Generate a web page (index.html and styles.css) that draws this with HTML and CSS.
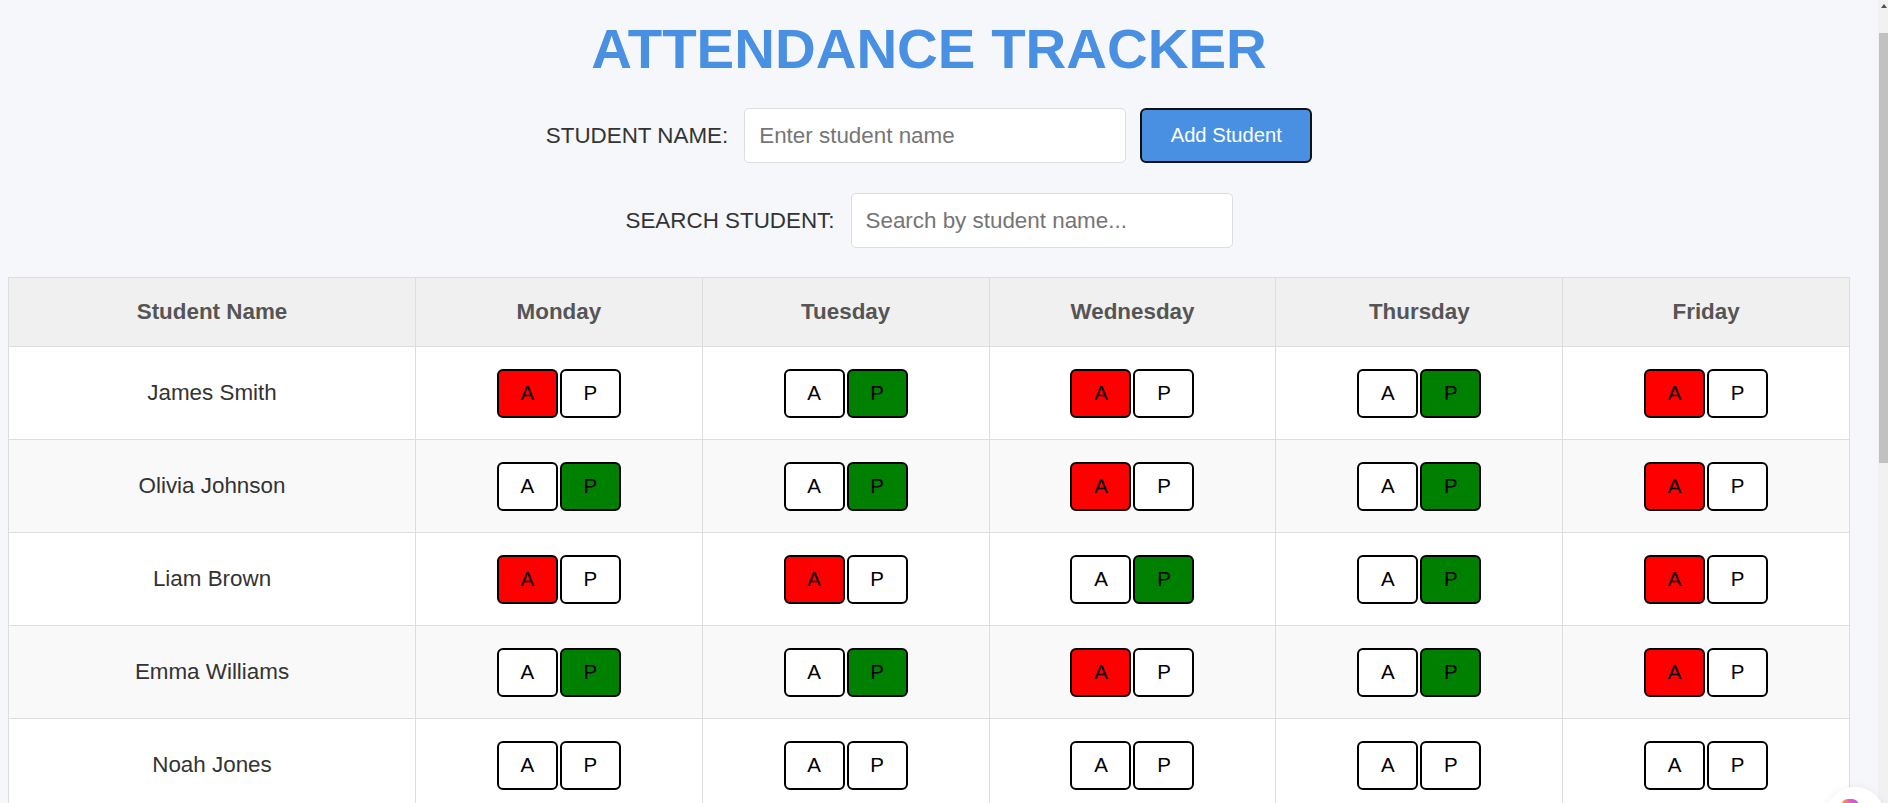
FILE: index.html
```html
<!DOCTYPE html>
<html lang="en">
<head>
<meta charset="utf-8">
<title>Attendance Tracker</title>
<link rel="stylesheet" href="styles.css">
</head>
<body>
<div class="app">
  <h1 class="title">ATTENDANCE TRACKER</h1>
  <div class="form-row">
    <label class="form-label" for="name">STUDENT NAME:</label>
    <input id="name" class="text-input" type="text" placeholder="Enter student name">
    <button class="add-btn">Add Student</button>
  </div>
  <div class="form-row search-row">
    <label class="form-label" for="search">SEARCH STUDENT:</label>
    <input id="search" class="text-input" type="text" placeholder="Search by student name...">
  </div>
  <table class="att-table">
    <colgroup>
      <col class="col-name">
      <col><col><col><col><col>
    </colgroup>
    <thead>
      <tr>
        <th>Student Name</th><th>Monday</th><th>Tuesday</th><th>Wednesday</th><th>Thursday</th><th>Friday</th>
      </tr>
    </thead>
    <tbody>
      <tr>
        <td>James Smith</td>
        <td><div class="ap"><button class="ap-btn absent">A</button><button class="ap-btn">P</button></div></td>
        <td><div class="ap"><button class="ap-btn">A</button><button class="ap-btn present">P</button></div></td>
        <td><div class="ap"><button class="ap-btn absent">A</button><button class="ap-btn">P</button></div></td>
        <td><div class="ap"><button class="ap-btn">A</button><button class="ap-btn present">P</button></div></td>
        <td><div class="ap"><button class="ap-btn absent">A</button><button class="ap-btn">P</button></div></td>
      </tr>
      <tr>
        <td>Olivia Johnson</td>
        <td><div class="ap"><button class="ap-btn">A</button><button class="ap-btn present">P</button></div></td>
        <td><div class="ap"><button class="ap-btn">A</button><button class="ap-btn present">P</button></div></td>
        <td><div class="ap"><button class="ap-btn absent">A</button><button class="ap-btn">P</button></div></td>
        <td><div class="ap"><button class="ap-btn">A</button><button class="ap-btn present">P</button></div></td>
        <td><div class="ap"><button class="ap-btn absent">A</button><button class="ap-btn">P</button></div></td>
      </tr>
      <tr>
        <td>Liam Brown</td>
        <td><div class="ap"><button class="ap-btn absent">A</button><button class="ap-btn">P</button></div></td>
        <td><div class="ap"><button class="ap-btn absent">A</button><button class="ap-btn">P</button></div></td>
        <td><div class="ap"><button class="ap-btn">A</button><button class="ap-btn present">P</button></div></td>
        <td><div class="ap"><button class="ap-btn">A</button><button class="ap-btn present">P</button></div></td>
        <td><div class="ap"><button class="ap-btn absent">A</button><button class="ap-btn">P</button></div></td>
      </tr>
      <tr>
        <td>Emma Williams</td>
        <td><div class="ap"><button class="ap-btn">A</button><button class="ap-btn present">P</button></div></td>
        <td><div class="ap"><button class="ap-btn">A</button><button class="ap-btn present">P</button></div></td>
        <td><div class="ap"><button class="ap-btn absent">A</button><button class="ap-btn">P</button></div></td>
        <td><div class="ap"><button class="ap-btn">A</button><button class="ap-btn present">P</button></div></td>
        <td><div class="ap"><button class="ap-btn absent">A</button><button class="ap-btn">P</button></div></td>
      </tr>
      <tr>
        <td>Noah Jones</td>
        <td><div class="ap"><button class="ap-btn">A</button><button class="ap-btn">P</button></div></td>
        <td><div class="ap"><button class="ap-btn">A</button><button class="ap-btn">P</button></div></td>
        <td><div class="ap"><button class="ap-btn">A</button><button class="ap-btn">P</button></div></td>
        <td><div class="ap"><button class="ap-btn">A</button><button class="ap-btn">P</button></div></td>
        <td><div class="ap"><button class="ap-btn">A</button><button class="ap-btn">P</button></div></td>
      </tr>
    </tbody>
  </table>
</div>
<div class="fake-scrollbar"><div class="sb-arrow"></div><div class="sb-thumb"></div></div>
<div class="corner-widget"><div class="widget-dot"></div></div>
</body>
</html>
```
FILE: styles.css
```css
html {
  overflow: hidden;
}
body {
  margin: 0;
  background: #f5f7fa;
  font-family: "Liberation Sans", Arial, sans-serif;
  color: #333;
}
.app {
  width: 1842px;
  margin-left: 8px;
  padding-top: 17px;
}
.title {
  margin: 0 0 27px;
  font-size: 56.4px;
  line-height: 64px;
  font-weight: bold;
  color: #4a90e2;
  text-align: center;
}
.form-row {
  display: flex;
  justify-content: center;
  align-items: center;
  margin-bottom: 30px;
}
.search-row {
  margin-bottom: 29px;
}
.form-label {
  font-size: 22.4px;
  color: #333;
  margin-right: 16px;
}
.text-input {
  box-sizing: border-box;
  width: 382px;
  height: 55px;
  padding: 0 14px;
  border: 1px solid #ddd;
  border-radius: 5px;
  background: #fff;
  font-family: "Liberation Sans", Arial, sans-serif;
  font-size: 22.4px;
  color: #333;
  outline: none;
}
.text-input::placeholder {
  color: #757575;
}
.add-btn {
  box-sizing: border-box;
  margin-left: 14px;
  width: 172px;
  height: 55px;
  background: #4a90e2;
  color: #fff;
  border: 2px solid #111;
  border-radius: 6px;
  font-family: "Liberation Sans", Arial, sans-serif;
  font-size: 20.2px;
  padding: 0;
}
.att-table {
  width: 1842px;
  border-collapse: collapse;
  table-layout: fixed;
  background: #fff;
  font-size: 22.4px;
}
.col-name {
  width: 407px;
}
.att-table th,
.att-table td {
  border: 1px solid #ddd;
  text-align: center;
  padding: 0;
}
.att-table th {
  height: 68px;
  background: #f0f0f0;
  color: #555;
  font-weight: bold;
}
.att-table td {
  height: 92px;
  color: #333;
}
.att-table tbody tr:nth-child(even) {
  background: #f9f9f9;
}
.ap {
  display: flex;
  justify-content: center;
  gap: 2px;
}
.ap-btn {
  box-sizing: border-box;
  width: 61px;
  height: 49px;
  border: 2px solid #000;
  border-radius: 6px;
  background: #fff;
  color: #000;
  font-family: "Liberation Sans", Arial, sans-serif;
  font-size: 20.5px;
  padding: 0;
}
.ap-btn.absent {
  background: #ff0000;
}
.ap-btn.present {
  background: #008000;
}
.fake-scrollbar {
  position: fixed;
  top: 0;
  right: 0;
  width: 10px;
  height: 100%;
  background: #f1f1f1;
}
.sb-arrow {
  width: 0;
  height: 0;
  margin: 4px 0 0 3px;
  border-left: 3px solid transparent;
  border-right: 3px solid transparent;
  border-bottom: 4px solid #505050;
}
.sb-thumb {
  position: absolute;
  top: 33px;
  left: 1px;
  width: 9px;
  height: 430px;
  background: #c1c1c1;
}
.corner-widget {
  position: fixed;
  left: 1825px;
  top: 787px;
  width: 60px;
  height: 60px;
  border-radius: 30px;
  background: #fff;
  box-shadow: 0 0 8px rgba(0, 0, 0, 0.06);
}
.widget-dot {
  margin: 12px 0 0 16px;
  width: 18px;
  height: 14px;
  border-radius: 7px;
  background: linear-gradient(90deg, #f7a34b, #e85db0, #9b5cf0);
}
```
